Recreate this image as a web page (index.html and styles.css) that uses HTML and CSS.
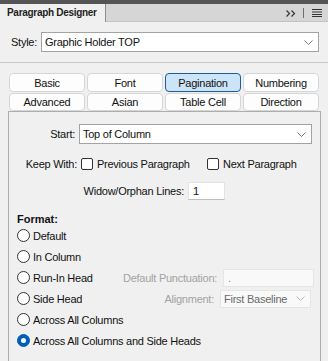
FILE: index.html
```html
<!DOCTYPE html>
<html>
<head>
<meta charset="utf-8">
<link rel="stylesheet" href="styles.css">
</head>
<body>
<div class="titlestrip"></div>
<div class="tabbar">
  <div class="paneltab">Paragraph Designer</div>
  <div class="tabbar-fill">
    <svg class="icon-more" width="10" height="7" viewBox="0 0 10 7"><polyline points="0.5,0.5 3.5,3.5 0.5,6.5" fill="none" stroke="#333" stroke-width="1.2"/><polyline points="5.5,0.5 8.5,3.5 5.5,6.5" fill="none" stroke="#333" stroke-width="1.2"/></svg>
    <span class="vsep"></span>
    <svg class="icon-menu" width="10" height="8" viewBox="0 0 10 8"><rect x="0" y="0" width="10" height="1" fill="#333"/><rect x="0" y="2.5" width="10" height="1" fill="#333"/><rect x="0" y="5" width="10" height="1" fill="#333"/><rect x="0" y="7" width="10" height="1" fill="#333"/></svg>
  </div>
</div>

<div class="style-row">
  <span class="style-lbl">Style:</span>
  <div class="select style-select">
    <span>Graphic Holder TOP</span>
    <svg class="chev" width="9" height="5" viewBox="0 0 9 5"><polyline points="0.5,0.5 4.5,4.5 8.5,0.5" fill="none" stroke="#777" stroke-width="1"/></svg>
  </div>
</div>
<div class="hr"></div>

<div class="tabs">
  <div class="tab">Basic</div>
  <div class="tab">Font</div>
  <div class="tab active">Pagination</div>
  <div class="tab">Numbering</div>
  <div class="tab">Advanced</div>
  <div class="tab">Asian</div>
  <div class="tab">Table Cell</div>
  <div class="tab">Direction</div>
</div>

<div class="content">
  <div class="start-row">
    <span class="start-lbl">Start:</span>
    <div class="select start-select">
      <span>Top of Column</span>
      <svg class="chev" width="9" height="5" viewBox="0 0 9 5"><polyline points="0.5,0.5 4.5,4.5 8.5,0.5" fill="none" stroke="#777" stroke-width="1"/></svg>
    </div>
  </div>

  <div class="keep-row">
    <span class="keep-lbl">Keep With:</span>
    <div class="check check-first"><span class="box"></span><span>Previous Paragraph</span></div>
    <div class="check"><span class="box"></span><span>Next Paragraph</span></div>
  </div>

  <div class="widow-row">
    <span class="widow-lbl">Widow/Orphan Lines:</span>
    <div class="input widow-input">1</div>
  </div>

  <div class="format-lbl">Format:</div>

  <div class="radios">
    <div class="radio-row"><div class="radio"><span class="dot"></span><span>Default</span></div></div>
    <div class="radio-row"><div class="radio"><span class="dot"></span><span>In Column</span></div></div>
    <div class="radio-row">
      <div class="radio"><span class="dot"></span><span>Run-In Head</span></div>
      <span class="field-lbl">Default Punctuation:</span>
      <div class="input disabled-field">.</div>
    </div>
    <div class="radio-row">
      <div class="radio"><span class="dot"></span><span>Side Head</span></div>
      <span class="field-lbl">Alignment:</span>
      <div class="select disabled-field align-select">
        <span>First Baseline</span>
        <svg class="chev" width="9" height="5" viewBox="0 0 9 5"><polyline points="0.5,0.5 4.5,4.5 8.5,0.5" fill="none" stroke="#bbb" stroke-width="1"/></svg>
      </div>
    </div>
    <div class="radio-row"><div class="radio"><span class="dot"></span><span>Across All Columns</span></div></div>
    <div class="radio-row"><div class="radio"><span class="dot checked"></span><span>Across All Columns and Side Heads</span></div></div>
  </div>
</div>
</body>
</html>
```

FILE: styles.css
```css
* { box-sizing: border-box; }
html, body { margin: 0; padding: 0; }
body {
  width: 328px;
  height: 361px;
  overflow: hidden;
  background: #f0f0f0;
  font-family: "Liberation Sans", Arial, sans-serif;
  font-size: 11px;
  letter-spacing: -0.25px;
  color: #111;
  white-space: nowrap;
}

.titlestrip { height: 4px; background: #555555; }

.tabbar { display: flex; height: 18px; background: #d6d6d6; }
.paneltab {
  width: 106px;
  background: #f0f0f0;
  border-right: 1px solid #8e8e8e;
  font-weight: bold;
  font-size: 10px;
  letter-spacing: -0.3px;
  line-height: 18px;
  padding-left: 7px;
  color: #1e1e1e;
}
.tabbar-fill {
  flex: 1;
  display: flex;
  align-items: center;
  justify-content: flex-end;
  padding-right: 6px;
  border-bottom: 1px solid #c4c4c4;
}
.icon-more { margin-right: 7px; margin-top: 1px; }
.vsep { width: 1px; height: 10px; background: #6e6e6e; margin-right: 8px; }
.icon-menu { display: block; }

.style-row {
  display: flex;
  align-items: center;
  margin-top: 10px;
  padding-left: 11px;
  height: 20px;
}
.style-lbl { width: 30px; }

.select {
  display: flex;
  align-items: center;
  justify-content: space-between;
  background: #fff;
  border: 1px solid #a3a3a3;
  padding: 0 5px 0 3px;
}
.style-select { width: 278px; height: 20px; }

.hr { height: 1px; background: #c9c9c9; margin-top: 10px; }

.tabs {
  display: grid;
  grid-template-columns: repeat(4, 76px);
  grid-template-rows: 19px 18px;
  column-gap: 2px;
  row-gap: 1px;
  margin-top: 10px;
  padding-left: 9px;
}
.tab {
  background: #fdfdfd;
  border: 1px solid #d6d6d6;
  border-radius: 4px;
  display: flex;
  align-items: center;
  justify-content: center;
}
.tab.active { background: #cce4f7; border-color: #1a5d97; }

.content {
  margin-left: 8px;
  width: 313px;
  height: 250px;
  border: 1px solid #adadad;
  border-bottom: none;
}

.start-row { display: flex; align-items: center; margin-top: 12px; height: 20px; }
.start-lbl { width: 66px; text-align: right; margin-right: 4px; }
.start-select { width: 233px; height: 20px; }

.keep-row { display: flex; align-items: center; margin-top: 12px; height: 16px; }
.keep-lbl { width: 68px; text-align: right; margin-right: 4px; }
.check { display: flex; align-items: center; }
.check-first { width: 126px; }
.box {
  width: 12px;
  height: 12px;
  border: 1px solid #333;
  border-radius: 2px;
  background: #fff;
  margin-right: 4px;
  flex: none;
}

.widow-row { display: flex; align-items: center; margin-top: 10px; height: 18px; }
.widow-lbl { width: 175px; text-align: right; margin-right: 4px; }
.input {
  background: #fff;
  border: 1px solid #e3e3e3;
  border-bottom-color: #bdbdbd;
  height: 18px;
  padding-left: 4px;
  display: flex;
  align-items: center;
}
.widow-input { width: 37px; }

.format-lbl {
  margin-top: 12px;
  padding-left: 8px;
  font-weight: bold;
  letter-spacing: 0;
  line-height: 14px;
  height: 13px;
}

.radios { padding: 0 9px 0 8px; }
.radio-row {
  display: grid;
  grid-template-columns: 100px 1fr 91px;
  column-gap: 6px;
  align-items: center;
  height: 21px;
}
.radio { display: flex; align-items: center; }
.dot {
  width: 13px;
  height: 13px;
  border-radius: 50%;
  border: 1px solid #333;
  background: #fff;
  margin-right: 3px;
  flex: none;
  display: flex;
  align-items: center;
  justify-content: center;
}
.dot.checked { background: #005fb8; border-color: #005fb8; }
.dot.checked::after {
  content: "";
  width: 5px;
  height: 5px;
  border-radius: 50%;
  background: #fff;
}
.field-lbl { text-align: right; color: #a3a3a3; }
.disabled-field {
  background: #f9f9f9;
  border: 1px solid #e5e5e5;
  color: #8a8a8a;
  height: 18px;
}
.align-select { color: #6a6a6a; }
```
